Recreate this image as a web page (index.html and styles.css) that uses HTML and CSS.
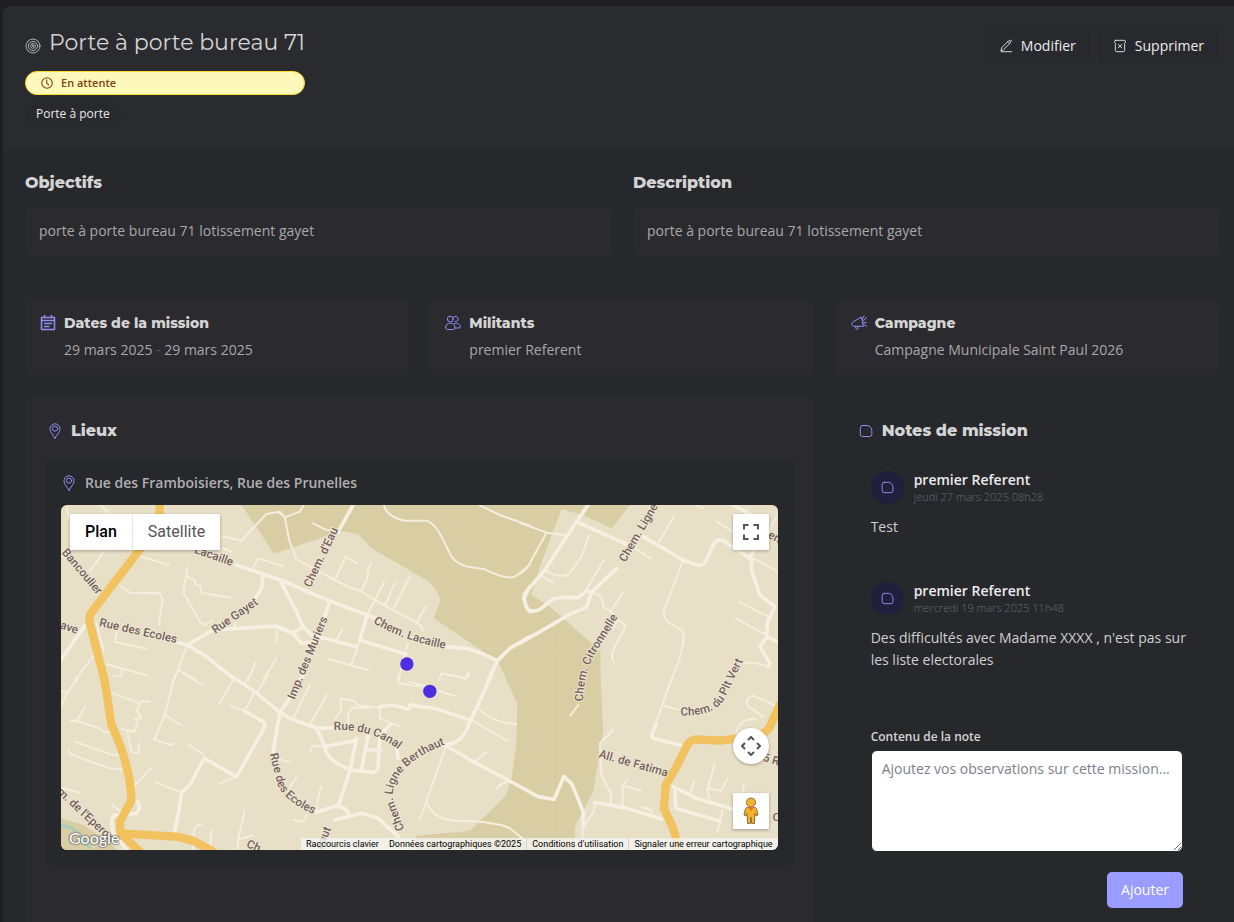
FILE: index.html
```html
<!DOCTYPE html>
<html lang="fr">
<head>
<meta charset="utf-8">
<meta name="viewport" content="width=device-width, initial-scale=1">
<title>Porte à porte bureau 71</title>
<link rel="stylesheet" href="styles.css">
</head>
<body>
<svg class="defs" aria-hidden="true">
  <symbol id="i-pin" viewBox="0 0 16 16"><path d="M8 15.300C6.600 12.300 3 9.500 3 5.800a5 5 0 0 1 10 0C13 9.500 9.400 12.300 8 15.300z"/><circle cx="8" cy="5.600" r="2.600"/></symbol>
  <symbol id="i-note" viewBox="0 0 16 16"><path d="M4.500 2.500h4.500c3 0 4.800 2.800 4.800 5.300v3.700a2 2 0 0 1-2 2H4.500a2.200 2.200 0 0 1-2.200-2.200V4.700a2.200 2.200 0 0 1 2.200-2.200z"/></symbol>
</svg>
<main class="panel">
  <header class="head">
    <div class="head-main">
      <h1 class="title">
        <svg class="icon" viewBox="0 0 16 16" aria-hidden="true"><circle cx="8" cy="8" r="7"/><circle cx="8" cy="8" r="4.600"/><rect x="5.800" y="5.800" width="4.400" height="4.400" rx="1.500"/><circle cx="8" cy="8" r=".6"/></svg>
        Porte à porte bureau 71
      </h1>
      <div class="status">
        <svg class="icon" viewBox="0 0 16 16" aria-hidden="true"><circle cx="8" cy="8" r="7"/><path d="M7.600 3.800v4.400l2.600 2.400"/></svg>
        En attente
      </div>
      <span class="chip">Porte à porte</span>
    </div>
    <div class="actions">
      <button class="btn" type="button">
        <svg class="icon" viewBox="0 0 16 16" aria-hidden="true"><path d="M2.500 14.500h12M2.300 13.200l.7-3.200 8-8c1.200-1.200 3.400.8 2.200 2.200l-8 8zM10 3l2.400 2.400M14.500 1.200l-1 1"/></svg>
        Modifier
      </button>
      <button class="btn" type="button">
        <svg class="icon" viewBox="0 0 16 16" aria-hidden="true"><path d="M3.200 1.500h9.600a1.500 1.500 0 0 1 1.500 1.700L13.300 5v8a1.500 1.500 0 0 1-1.500 1.500H4.200A1.500 1.500 0 0 1 2.700 13V5L1.700 3.200A1.500 1.500 0 0 1 3.200 1.500zM6 6.200l4 3.800M10 6.200L6 10"/></svg>
        Supprimer
      </button>
    </div>
  </header>

  <div class="content">
    <div class="texts">
      <section>
        <h2 class="heading">Objectifs</h2>
        <p class="box">porte à porte bureau 71 lotissement gayet</p>
      </section>
      <section>
        <h2 class="heading">Description</h2>
        <p class="box">porte à porte bureau 71 lotissement gayet</p>
      </section>
    </div>

    <div class="grid">
      <section class="card">
        <svg class="icon" viewBox="0 0 16 16" aria-hidden="true"><path class="bold" d="M1.500 2.500h13v12h-13zM1.500 5.500h13M4.500 0v2.500M11.500 0v2.500M4.500 8.500h7M4.500 11.500h4.500"/></svg>
        <div>
          <h3 class="subheading">Dates de la mission</h3>
          <p class="value">29 mars 2025 <span class="dash">-</span> 29 mars 2025</p>
        </div>
      </section>
      <section class="card">
        <svg class="icon" viewBox="0 0 16 16" aria-hidden="true"><circle cx="5.300" cy="4" r="2.900"/><path d="M8.300 2.400a2.700 2.700 0 1 1 1.600 4.300M.6 12.800c0-3 2-4.700 4.700-4.700S10 9.800 10 12.800c0 1.300-1 1.700-2 1.700H2.600c-1 0-2-.4-2-1.700zM9.500 8.600c3.200-.8 6 1 5.900 3.200 0 .8-.7 1.200-1.500 1.200H10"/></svg>
        <div>
          <h3 class="subheading">Militants</h3>
          <p class="value">premier Referent</p>
        </div>
      </section>
      <section class="card">
        <svg class="icon" viewBox="0 0 16 16" aria-hidden="true"><path d="M10 2.200L2 7c-2 1.200-1.300 4.300 1 4.300h9zM4.500 11.500l.6 2.300c.4 1.200 2.200.8 2-.4l-.3-2M11.500 4.500L13 1M12.300 6l3-3.500M12.500 7.800l2.800-.2M12.800 9.500l2.600 1.800"/></svg>
        <div>
          <h3 class="subheading">Campagne</h3>
          <p class="value">Campagne Municipale Saint Paul 2026</p>
        </div>
      </section>

      <section class="places">
        <h2 class="heading with-icon"><svg class="icon" aria-hidden="true"><use href="#i-pin"/></svg>Lieux</h2>
        <article class="place">
          <h3 class="address"><svg class="icon" aria-hidden="true"><use href="#i-pin"/></svg>Rue des Framboisiers, Rue des Prunelles</h3>
          <div class="map">
            <svg class="map-canvas" viewBox="33 15 2151 1035" preserveAspectRatio="xMidYMid slice" role="img" aria-label="Carte">
              <rect class="land" x="0" y="0" width="2200" height="1060"/>
              <path class="park" d="M575 15L672 160 690 155 830 108 870 92 925 102 965 145 1130 240Q1160 262 1172 300L1152 355 1345 485 1402 610 1400 730 1386 830 1370 885 1260 993 1100 1007 1090 1050H1575V980L1630 875 1660 695 1652 525V455L1625 430 1500 320 1445 285 1470 200 1535 28 1600 45 1685 85 1740 15z"/>
              <path class="park" d="M33 955L100 975 180 1025 200 1050H33z"/>
              <path class="river" d="M33 978Q80 975 120 1045"/>
              <path class="seam" d="M128 15V1050M818 15V1050M1508 15V1050M33 445H2184"/>

              <g class="lane">
                <path d="M150 15L180 40M50 20L58 60M515 108L575 122 605 90 650 42 690 35 705 52M120 215L165 150 180 130M275 170L357 195M212 258L240 278 330 280 338 300 327 375M412 205L401 278 450 365 465 375 490 360M412 230L435 240 437 255 452 258 455 278 542 293M608 205L625 175 700 198M200 395L195 425 290 446M140 370L162 455M170 492L290 526M192 528L215 530 217 508M412 435L373 540M388 512L440 540M680 380V427M617 488L595 540M680 475L640 540M550 388L560 365M130 470L75 540M520 145L545 155"/>
                <path transform="translate(690)" d="M0 40L15 52 60 35 72 15M15 52L28 120 50 178 165 240 205 260 245 275 285 300 410 368 425 378 428 392M385 430L372 465 357 540M100 70L135 88 180 100M165 240L198 170 232 190M245 275L262 235 265 205 275 190M262 345L285 300 313 245M315 315L346 248M340 330L390 230M410 370L437 320M240 420L215 492M143 477L266 510M172 420L187 388M478 540L485 520 555 535 567 515M312 15Q320 50 375 62H440Q465 70 485 110L515 170Q535 195 565 200L615 208Q680 240 705 230L750 195M598 15L660 45 750 77"/>
                <path transform="translate(1410)" d="M0 68L80 98 135 105M80 98L30 190Q20 210 0 222M207 107L185 170 150 220Q125 240 75 210M62 225L100 248M252 180L200 268M462 50L418 125M345 145L393 175M490 180L435 325Q425 350 450 370L485 390Q495 400 490 430L478 480 455 540M308 280L275 330M215 280Q250 280 250 320L280 340 292 360Q320 370 315 385L280 450Q272 475 283 487M292 360L280 385M590 65L640 95M530 15L550 25M700 175L774 215M658 305L745 350M647 355L740 405M660 487L710 490 745 500M770 50L745 100"/>
                <path transform="translate(0 525)" d="M33 95L50 55 85 10M33 45L50 55M190 55L270 85 275 78 298 80M270 85L262 105 275 130 255 132M265 132L255 170 215 162M232 170L245 230 265 235 268 208M62 138L80 138 150 160 160 170 180 172M80 138L105 97M75 200L190 240 215 243M57 225Q55 235 80 245L180 280 215 283M375 0L345 120 313 193 362 210 372 205M345 120L397 153M408 0L458 30M508 87L550 15M418 210L463 240M510 325L560 305M318 322L395 353M305 278L240 345M542 92L585 108 612 55M600 0L585 25M655 0L620 55M780 30L730 130M830 60L780 150M680 250L720 262M740 307L718 340M815 335Q800 370 803 410M430 525L432 470Q435 450 455 448M585 405L568 480 562 525M562 495L610 480M485 468L480 525M187 390L215 410M40 340L90 353M855 135L875 100 872 70 915 78 920 90 985 98M895 150Q890 100 915 98L958 100M1045 0V25L1110 35M990 95V130L1050 155M782 230Q783 210 800 212L825 215M730 435L760 440 770 420"/>
                <path transform="translate(1080 525)" d="M202 97Q250 145 320 147M185 135L293 198M108 215L30 435M50 380Q70 440 160 438 260 440 300 460L350 500M198 258L230 230M262 342L270 330 295 318M610 165L570 205 575 300 603 355V385M638 390V335L653 312M640 333L693 347M790 0L725 180M765 92L805 105M555 385L552 410 525 450M505 90L482 122M0 20L135 63M125 0L170 12 178 0M915 265L893 345 900 380M895 340L935 347 953 310M842 355L853 318M938 405L923 470M695 397L725 405V415M1105 95L1030 62Q1010 65 1010 90L1060 125M980 170Q990 130 1040 132M518 450V525M1003 325L998 350"/>
              </g>
              <g class="street">
                <path d="M560 195L640 222 720 250M640 222L635 265 600 320M375 425L412 435 490 390 680 378 730 400M412 435L470 470 550 535M33 480L110 370M690 240L740 335"/>
                <path transform="translate(690)" d="M220 15L175 95M0 240L150 303 262 345 300 360M150 303L135 350M50 335L70 380 100 410 135 415 230 440M262 345L240 420 378 463M0 385L40 400 70 380M40 400L65 430 100 425M495 440L560 445 600 458 653 482M750 410L690 445 653 482 625 540M750 260L732 295 740 322 750 335M60 540L75 520"/>
                <path transform="translate(1410)" d="M205 15L170 65 75 210 15 280Q8 300 22 325 35 340 60 328L100 297 130 292 175 293 200 272 218 278M170 65L325 135M370 110L490 180 530 195Q550 200 560 180L580 135Q590 115 610 122L690 175 700 155M290 205L215 278 200 322 155 340 0 430M695 175V210L720 285 765 320 742 370V410L774 425M742 410L720 440 750 490 745 500M640 15L720 60"/>
                <path transform="translate(0 525)" d="M540 0L615 50 690 112 720 130 800 160 855 158M585 108L640 140Q650 150 640 165L560 305 463 250 420 330 395 353 385 420 373 475M690 112L670 230M690 112L720 70M800 160L825 215Q830 260 905 285L970 292Q985 290 985 270L990 180 1020 150M825 215L910 198M920 190L900 290 865 395M955 180L935 285M948 225H993M800 412L860 392Q890 398 895 415M855 435L935 415 985 430 1045 485M990 95L1030 90 1075 102 1090 88M255 375Q280 390 260 415L195 420Q180 430 190 470L230 525M1040 210L1045 250"/>
                <path transform="translate(1080 525)" d="M245 0L202 95 180 140Q165 190 130 205L75 213M0 90L75 100 180 135M110 213L200 265 300 318 385 365 433 373 462 305 485 325 500 360 520 410V455M555 383L640 397 755 432M740 145L725 180 730 190 820 213M790 335L860 370 1000 412M795 340L798 400 860 418 930 438"/>
              </g>
              <g class="artery">
                <path d="M330 10L328 60 275 142 123 340Q116 352 120 370L164 540 185 675Q240 790 245 900L210 965 212 1000 275 1060M212 1000L380 1010 430 1022 490 1055"/>
                <path d="M2190 615L2160 680Q2145 705 2110 710L2010 722 1940 718Q1920 720 1912 735L1880 800 1848 855 1842 925 1870 985 1890 1055"/>
              </g>

              <defs>
                <path id="l-1" d="M432 158L560 203"/>
                <path id="l-2" d="M34 158L160 306"/>
                <path id="l-3" d="M8 378L100 408"/>
                <path id="l-4" d="M147 378L400 434"/>
                <path id="l-5" d="M496 402L650 295"/>
                <path id="l-6" d="M782 264L878 62"/>
                <path id="l-7" d="M734 600L840 340"/>
                <path id="l-8" d="M970 368Q1060 425 1220 453"/>
                <path id="l-9" d="M1726 188L1854 -30"/>
                <path id="l-10" d="M1600 605Q1600 530 1630 470L1705 350"/>
                <path id="l-11" d="M1892 646Q1990 650 2022 600L2090 460"/>
                <path id="l-12" d="M852 690Q975 685 1060 760"/>
                <path id="l-13" d="M1063 988L1036 915Q1022 890 1034 855 1062 778 1200 728"/>
                <path id="l-14" d="M660 762L682 850Q706 915 830 957"/>
                <path id="l-15" d="M20 878L200 1045"/>
                <path id="l-16" d="M588 1040L680 1080"/>
                <path id="l-17" d="M818 1050L880 900"/>
                <path id="l-18" d="M1645 772L1850 830"/>
                <path id="l-19" d="M2118 777L2210 803"/>
                <path id="l-20" d="M2152 112L2220 147"/>
              </defs>
              <g class="label">
                <text><textPath href="#l-1">Lacaille</textPath></text>
                <text><textPath href="#l-2">Bancoulier</textPath></text>
                <text><textPath href="#l-3">Pave</textPath></text>
                <text><textPath href="#l-4">Rue des Ecoles</textPath></text>
                <text><textPath href="#l-5">Rue Gayet</textPath></text>
                <text><textPath href="#l-6">Chem. d'Eau</textPath></text>
                <text><textPath href="#l-7">Imp. des Muriers</textPath></text>
                <text><textPath href="#l-8">Chem. Lacaille</textPath></text>
                <text><textPath href="#l-9">Chem. Ligne</textPath></text>
                <text><textPath href="#l-10">Chem. Citronnelle</textPath></text>
                <text><textPath href="#l-11">Chem. du Plt Vert</textPath></text>
                <text><textPath href="#l-12">Rue du Canal</textPath></text>
                <text><textPath href="#l-13">Chem. Ligne Berthaut</textPath></text>
                <text><textPath href="#l-14">Rue des Ecoles</textPath></text>
                <text><textPath href="#l-15">m. de l'Eperon</textPath></text>
                <text><textPath href="#l-16">Ch</textPath></text>
                <text><textPath href="#l-17">haut</textPath></text>
                <text><textPath href="#l-18">All. de Fatima</textPath></text>
                <text><textPath href="#l-19">55 R</textPath></text>
                <text><textPath href="#l-20">en</textPath></text>
                <text x="2168" y="964">C</text>
              </g>
              <circle class="marker" cx="1071" cy="492" r="20"/>
              <circle class="marker" cx="1140" cy="574" r="20"/>
            </svg>
            <div class="map-types">
              <button class="map-type is-active" type="button">Plan</button>
              <button class="map-type" type="button">Satellite</button>
            </div>
            <button class="map-btn map-full" type="button" aria-label="Plein écran">
              <svg viewBox="0 0 20 20" aria-hidden="true"><path d="M3 7.500V3h4.500M12.500 3H17v4.500M17 12.500V17h-4.500M7.500 17H3v-4.500"/></svg>
            </button>
            <div class="map-tools">
              <button class="map-btn map-round" type="button" aria-label="Commandes de la caméra">
                <svg viewBox="0 0 20 20" aria-hidden="true"><path d="M7 4l3-3 3 3M7 16l3 3 3-3M4 7l-3 3 3 3M16 7l3 3-3 3"/></svg>
              </button>
              <button class="map-btn" type="button" aria-label="Street View">
                <svg class="pegman" viewBox="0 0 16 28" aria-hidden="true"><path d="M4.500 10.500h7c1.500 0 2 1 2.300 2.200l1.200 5.300-2 .8-1-2.500-.6 10.200H8.700L8 20l-.7 6.500H4.600L4 16.300l-1 2.500-2-.8 1.200-5.300c.3-1.200.8-2.200 2.300-2.200z"/><circle cx="8" cy="5.500" r="4.500"/><path class="scarf" d="M4.800 10h6.400L8 14z"/></svg>
              </button>
            </div>
            <span class="map-logo">Google</span>
            <div class="credits">
              <button class="credit" type="button">Raccourcis clavier</button>
              <span class="credit">Données cartographiques ©2025</span>
              <a class="credit" href="#">Conditions d'utilisation</a>
              <a class="credit" href="#">Signaler une erreur cartographique</a>
            </div>
          </div>
        </article>
      </section>

      <section class="notes">
        <h2 class="heading with-icon"><svg class="icon" aria-hidden="true"><use href="#i-note"/></svg>Notes de mission</h2>
        <div class="note-list">
          <article class="note">
            <div class="note-head">
              <span class="avatar"><svg class="icon" aria-hidden="true"><use href="#i-note"/></svg></span>
              <div>
                <h3 class="author">premier Referent</h3>
                <time class="date">jeudi 27 mars 2025 08h28</time>
              </div>
            </div>
            <p class="note-text">Test</p>
          </article>
          <article class="note">
            <div class="note-head">
              <span class="avatar"><svg class="icon" aria-hidden="true"><use href="#i-note"/></svg></span>
              <div>
                <h3 class="author">premier Referent</h3>
                <time class="date">mercredi 19 mars 2025 11h48</time>
              </div>
            </div>
            <p class="note-text">Des difficultés avec Madame XXXX , n'est pas sur les liste electorales</p>
          </article>
        </div>
        <form class="note-form">
          <label class="label-text" for="note">Contenu de la note</label>
          <textarea class="field" id="note" placeholder="Ajoutez vos observations sur cette mission..."></textarea>
          <button class="submit" type="button">Ajouter</button>
        </form>
      </section>
    </div>
  </div>
</main>
</body>
</html>
```
FILE: styles.css
```css
* { box-sizing: border-box; }

body {
  margin: 0;
  padding: 6px 0 0 3px;
  background: #1f1f21;
  color: #a8a8aa;
  font: 400 14px/22px "Open Sans", sans-serif;
}

h1, h2, h3, p { margin: 0; }
button, textarea { font: inherit; }
button { border: 0; cursor: pointer; }

.defs { position: absolute; width: 0; height: 0; }

.icon {
  flex: none;
  width: 16px;
  height: 16px;
  fill: none;
  stroke: currentColor;
  stroke-linecap: round;
  stroke-linejoin: round;
}
.icon .bold { stroke-width: 1.5; }

.panel {
  display: flex;
  flex-direction: column;
  min-height: calc(100vh - 6px);
  border-top-left-radius: 8px;
  background: #27282c;
  overflow: hidden;
}

.head {
  display: flex;
  justify-content: space-between;
  align-items: flex-start;
  padding: 22px 15px 23px 22px;
  background: #2a2b2e;
}
.head-main {
  display: flex;
  flex-direction: column;
  align-items: flex-start;
  gap: 7px;
}
.title {
  display: flex;
  align-items: center;
  gap: 8px;
  color: #d4d4d4;
  font: 400 22px/30px Montserrat, Inter, sans-serif;
}
.title .icon { margin-top: 6px; stroke: #b4b4b4; }
.status {
  display: flex;
  align-items: center;
  align-self: stretch;
  gap: 8px;
  margin-top: 6px;
  padding: 0 15px;
  height: 24px;
  border: 1px solid #fadb2f;
  border-radius: 12px;
  background: #fef9ba;
  color: #7a4513;
  font-size: 11px;
  font-weight: 600;
}
.status .icon { width: 12px; height: 12px; stroke-width: 1.5; }
.chip {
  padding: 0 11px;
  border-radius: 12px;
  background: #28292c;
  color: #e8e8e8;
  font-size: 12px;
  line-height: 24px;
}
.actions { display: flex; gap: 7px; }
.btn {
  display: flex;
  align-items: center;
  gap: 8px;
  height: 36px;
  padding: 0 15px;
  border-radius: 6px;
  background: #28292c;
  color: #ececec;
}
.btn .icon { width: 14px; height: 14px; }

.content {
  display: flex;
  flex: 1;
  flex-direction: column;
  gap: 44px;
  padding: 22px 15px 0 22px;
}
.texts {
  display: grid;
  grid-template-columns: 1fr 1fr;
  gap: 22px;
}
.heading {
  color: #d4d4d4;
  font: 800 16px/24px Montserrat, Inter, sans-serif;
}
.box {
  margin-top: 12px;
  padding: 13px 14px 14px;
  border-radius: 6px;
  background: #2b2a2e;
}

.grid {
  display: grid;
  flex: 1;
  grid-template-columns: repeat(3, minmax(0, 1fr));
  grid-template-rows: auto 1fr;
  gap: 22px;
}
.card {
  display: flex;
  gap: 8px;
  padding: 13px 15px 14px;
  border-radius: 6px;
  background: #2b2a2e;
}
.card .icon { margin-top: 2px; color: #8f8ff5; }
.subheading {
  color: #d4d4d4;
  font: 800 14px/20px Montserrat, Inter, sans-serif;
}
.value { margin-top: 6px; }
.dash { color: #5c5c60; }

.with-icon { display: flex; align-items: center; gap: 8px; }
.with-icon .icon, .address .icon { color: #8f8ff5; }

.places {
  grid-column: span 2;
  padding: 22px 20px 20px;
  border-radius: 6px 6px 0 0;
  background: #2b2a2e;
}
.places .heading { padding-left: 2px; }
.place {
  margin-top: 15px;
  padding: 16px;
  border-radius: 8px;
  background: #27282c;
}
.address {
  display: flex;
  align-items: center;
  gap: 8px;
  color: #b0b0b2;
  font-size: 14px;
  font-weight: 600;
  line-height: 18px;
}

.map {
  position: relative;
  height: 345px;
  margin-top: 13px;
  border-radius: 6px;
  overflow: hidden;
  font-family: Roboto, sans-serif;
}
.map-canvas { display: block; width: 100%; height: 100%; }
.land { fill: #e7dfc6; }
.park { fill: #d9cda4; }
.river { fill: none; stroke: #a9cfb9; stroke-width: 10; }
.seam { fill: none; stroke: #fff; stroke-width: 2; opacity: .12; }
.lane, .street, .artery { fill: none; stroke-linecap: round; stroke-linejoin: round; }
.lane { stroke: #f4eedf; stroke-width: 6; }
.street { stroke: #f5f0e2; stroke-width: 11; }
.artery { stroke: #f1c25e; stroke-width: 25; }
.label {
  fill: #75605c;
  stroke: #efe8d6;
  stroke-width: 5;
  paint-order: stroke;
  font-size: 35px;
  font-weight: 500;
}
.marker { fill: #4c2fe0; }

.map-types {
  position: absolute;
  top: 9px;
  left: 9px;
  display: flex;
  box-shadow: 0 1px 3px rgba(0, 0, 0, .3);
}
.map-type {
  height: 36px;
  padding: 0 15px;
  background: #fff;
  color: #555;
  font-size: 16px;
}
.map-type + .map-type { border-left: 1px solid #e6e6e6; }
.is-active { color: #000; font-weight: 500; }
.map-btn {
  display: grid;
  place-items: center;
  width: 36px;
  height: 36px;
  padding: 0;
  background: #fff;
  box-shadow: 0 1px 3px rgba(0, 0, 0, .3);
}
.map-btn svg { width: 20px; height: 20px; fill: none; stroke: #555; stroke-width: 2; }
.map-full { position: absolute; top: 9px; right: 9px; }
.map-round { border-radius: 50%; }
.map-tools {
  position: absolute;
  right: 9px;
  bottom: 21px;
  display: grid;
  gap: 29px;
}
.map-btn .pegman { width: 16px; height: 28px; fill: #f6b22d; stroke: #8a6d3a; stroke-width: 1; }
.pegman .scarf { fill: #e2702c; stroke: none; }
.map-logo {
  position: absolute;
  bottom: 2px;
  left: 8px;
  color: #fff;
  font: 500 16px/20px Lato, sans-serif;
  text-shadow: 0 0 1px #555, 0 0 2px #555, 0 0 2px #666;
}
.credits {
  position: absolute;
  right: 0;
  bottom: 0;
  display: flex;
  background: rgba(245, 245, 245, .75);
}
.credit {
  padding: 0 5px;
  background: none;
  color: #000;
  font-size: 9px;
  line-height: 12px;
  text-decoration: none;
}
.credit + a { border-left: 1px solid #ddd5bb; }

.notes { padding: 22px; }
.note-list { display: grid; gap: 16px; margin-top: 14px; }
.note { padding: 14px 10px 14px 13px; }
.note + .note { border-bottom: 1px solid #2a2a2e; }
.note-head { display: flex; gap: 10px; }
.avatar {
  display: grid;
  place-items: center;
  width: 33px;
  height: 33px;
  border-radius: 50%;
  background: #221f3d;
  color: #8f8ff5;
}
.avatar .icon { width: 15px; height: 15px; }
.author { color: #ececec; font-size: 14px; font-weight: 600; line-height: 18px; }
.date { display: block; color: #68686c; font-size: 11px; font-weight: 300; line-height: 16px; }
.note-text { margin-top: 11px; color: #d0d0d0; }
.note-form {
  display: flex;
  flex-direction: column;
  padding: 42px 14px 14px 13px;
}
.label-text { color: #d4d4d4; font-size: 12px; font-weight: 600; line-height: 18px; }
.field {
  height: 102px;
  margin-top: 4px;
  padding: 7px 10px;
  border: 1px solid #27282c;
  border-radius: 6px;
  background: #fff;
  color: #27282c;
  resize: vertical;
}
.field::placeholder { color: #7b818d; }
.submit {
  align-self: flex-end;
  height: 36px;
  margin-top: 20px;
  padding: 0 14px;
  border-radius: 5px;
  background: #9a9cff;
  color: #fff;
}
```
